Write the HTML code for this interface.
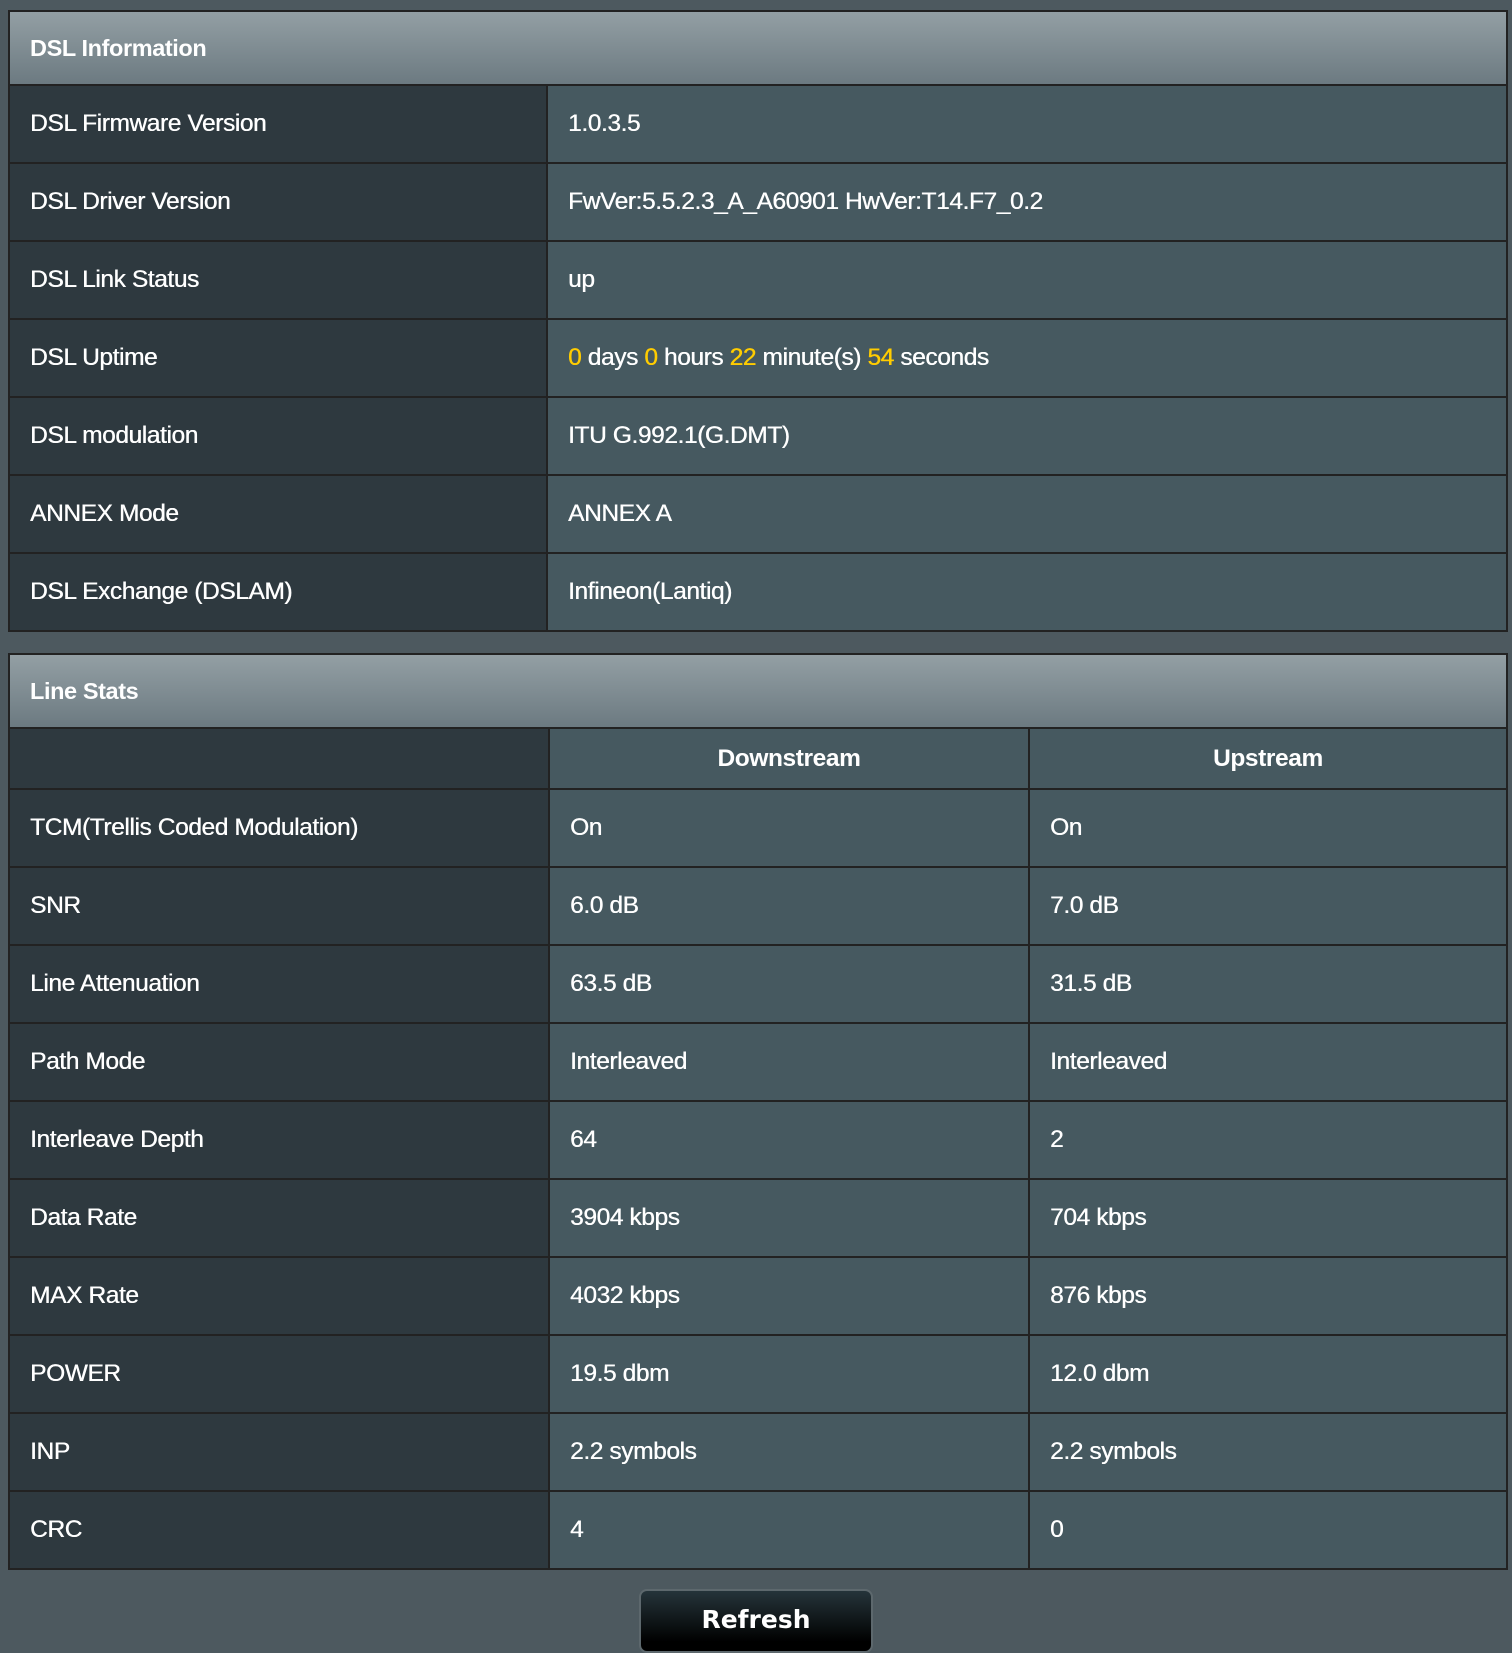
<!DOCTYPE html>
<html><head><meta charset="utf-8"><style>
html,body{margin:0;padding:0}
body{width:1512px;height:1648px;background:#4d595f;font-family:"Liberation Sans",Arial,sans-serif;color:#fff;position:relative;overflow:hidden}
table{position:absolute;left:8px;width:1500px;border-collapse:collapse;table-layout:fixed;border:2px solid #222}
td,th{border:2px solid #222;font-size:24.5px;padding:0 0 0 20px;text-align:left;font-weight:normal;letter-spacing:-0.4px;text-shadow:0.4px 0 0 #fff}
th.h{height:72px;background:linear-gradient(#939fa4,#6c7a81);font-weight:bold;font-size:23.5px;text-shadow:none}
td{height:76px}
td.l{background:#2e393f}
td.v{background:#465960}
tr.ch td{height:59px;font-weight:bold;text-align:center;padding:0;background:#465960;text-shadow:none}
tr.ch td.l{background:#2e393f}
.y{color:#fc0;text-shadow:0.4px 0 0 #fc0}
.btn{position:absolute;left:639px;top:1589px;width:234px;height:64px;border-radius:8px;background:linear-gradient(#25343a,#000 85%);border:2px solid #5d686d;box-sizing:border-box;text-align:center;font-weight:bold;font-size:25px;line-height:58px;font-family:"DejaVu Sans","Liberation Sans",sans-serif}
</style></head><body>
<table style="top:10px">
<col style="width:538px"><col>
<tr><th class="h" colspan="2">DSL Information</th></tr>
<tr><td class="l">DSL Firmware Version</td><td class="v">1.0.3.5</td></tr>
<tr><td class="l">DSL Driver Version</td><td class="v">FwVer:5.5.2.3_A_A60901 HwVer:T14.F7_0.2</td></tr>
<tr><td class="l">DSL Link Status</td><td class="v">up</td></tr>
<tr><td class="l">DSL Uptime</td><td class="v"><span class="y">0</span> days <span class="y">0</span> hours <span class="y">22</span> minute(s) <span class="y">54</span> seconds</td></tr>
<tr><td class="l">DSL modulation</td><td class="v">ITU G.992.1(G.DMT)</td></tr>
<tr><td class="l">ANNEX Mode</td><td class="v">ANNEX A</td></tr>
<tr><td class="l">DSL Exchange (DSLAM)</td><td class="v">Infineon(Lantiq)</td></tr>
</table>
<table style="top:653px">
<col style="width:540px"><col style="width:480px"><col>
<tr><th class="h" colspan="3">Line Stats</th></tr>
<tr class="ch"><td class="l"></td><td>Downstream</td><td>Upstream</td></tr>
<tr><td class="l">TCM(Trellis Coded Modulation)</td><td class="v">On</td><td class="v">On</td></tr>
<tr><td class="l">SNR</td><td class="v">6.0 dB</td><td class="v">7.0 dB</td></tr>
<tr><td class="l">Line Attenuation</td><td class="v">63.5 dB</td><td class="v">31.5 dB</td></tr>
<tr><td class="l">Path Mode</td><td class="v">Interleaved</td><td class="v">Interleaved</td></tr>
<tr><td class="l">Interleave Depth</td><td class="v">64</td><td class="v">2</td></tr>
<tr><td class="l">Data Rate</td><td class="v">3904 kbps</td><td class="v">704 kbps</td></tr>
<tr><td class="l">MAX Rate</td><td class="v">4032 kbps</td><td class="v">876 kbps</td></tr>
<tr><td class="l">POWER</td><td class="v">19.5 dbm</td><td class="v">12.0 dbm</td></tr>
<tr><td class="l">INP</td><td class="v">2.2 symbols</td><td class="v">2.2 symbols</td></tr>
<tr><td class="l">CRC</td><td class="v">4</td><td class="v">0</td></tr>
</table>
<div class="btn">Refresh</div>
</body></html>
